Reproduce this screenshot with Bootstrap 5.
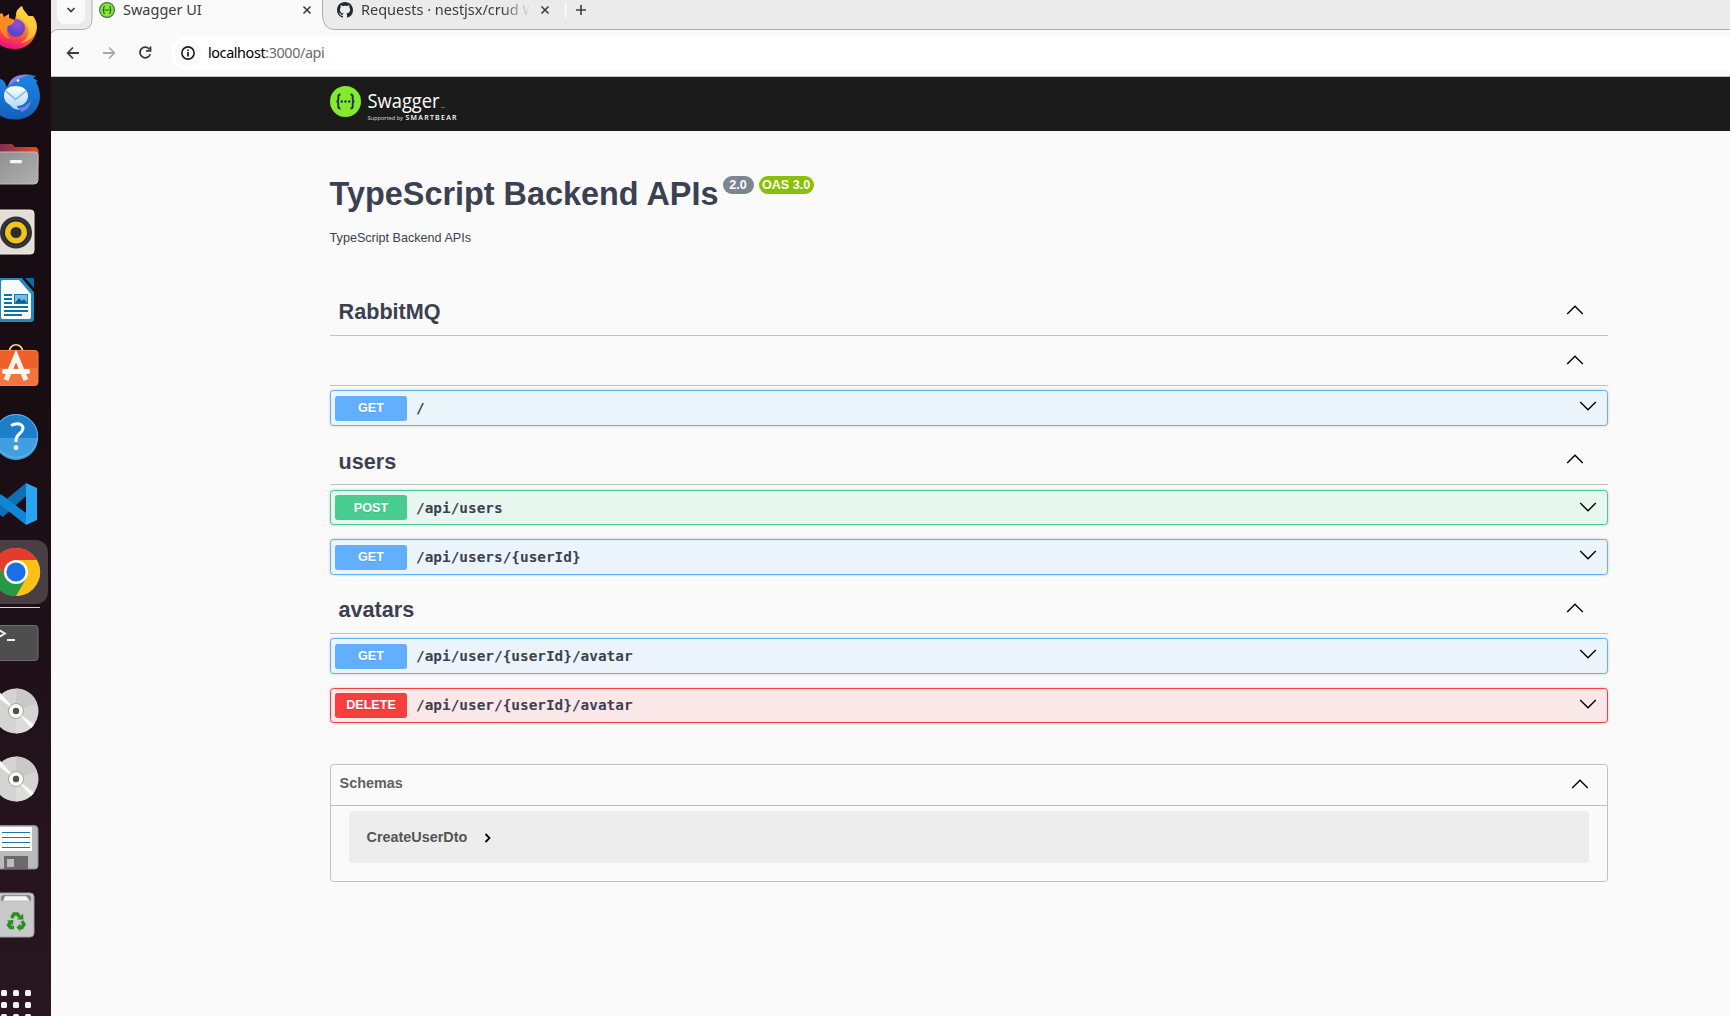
<!DOCTYPE html>
<html lang="en">
<head>
<meta charset="utf-8">
<title>Swagger UI</title>
<link href="https://cdn.jsdelivr.net/npm/bootstrap@5.3.0/dist/css/bootstrap.min.css" rel="stylesheet">
<style>
body{width:1730px;height:1016px;overflow:hidden;background:#fafafa;color:#3b4151;font-family:"Liberation Sans",Arial,sans-serif}
svg{display:block;flex:none}
.dock{width:51px;height:1016px;background:linear-gradient(170deg,#190d14 40%,#291620);overflow:hidden;flex:none}
.dock-list{margin-top:-6px}
.dock-line{height:3px;width:40px;padding-top:1px}
.dock-line::before{content:"";display:block;height:1px;background:#d8d4d6}
.chrome-ui{font-family:"Noto Sans",sans-serif;color:#3c3c3f}
.tabstrip{height:30px;background:#ebebeb}
.strip-shape{left:0;top:0;z-index:0}
.tab-menu{width:28px;height:24px;margin-left:6px;background:#fafafa;border-radius:0 0 8px 8px}
.tab-on{width:231px;height:20px;margin-left:7px;padding-left:7px}
.tab-off{width:242px;height:20px;padding-left:14px}
.tab-text{font-size:14.5px;line-height:20px;height:22px;white-space:nowrap}
.tab-fade{width:168px;-webkit-mask-image:linear-gradient(90deg,#000 84%,transparent 101%)}
.toolbar{height:47px;border-bottom:1px solid #bfbfbf;padding-top:6px}
.omnibox{height:34px;background:#fff;border-radius:17px 0 0 17px;margin-left:13px}
.info-dot{width:26px;height:26px;border-radius:50%;background:#fafafa;margin-left:4px}
.url{font-size:14.4px;line-height:34px;margin-left:7px;letter-spacing:-.4px}
.topbar{height:54px;background:#1b1b1b;padding-left:279px}
.api{width:1278px;margin-left:279px}
.api-title{font-size:32.4px;line-height:38px;height:38px;font-weight:700;margin-top:43px}
.api-name{padding-top:1px;width:387px;margin-left:-.4px;white-space:nowrap}
.pill{font-size:12.6px;line-height:18px;height:18px;border-radius:9px;color:#fff;font-weight:700;text-align:center;margin-top:2px}
.api-desc{font-size:12.6px;line-height:16px;margin:18px 0 0 -.4px}
.tag{height:50px;border-bottom:1px solid #bfc0c4;padding:0 24px 0 8.6px}
.tag svg{margin-bottom:1px}
.tag-name{font-size:21.6px;line-height:26px;font-weight:700;padding-top:3px}
.tag-low{padding-top:5px}
.op{height:35px;border:1px solid;border-radius:3.6px;box-shadow:0 0 3px rgba(0,0,0,.19);padding:0 10px 0 4px}
.op-tall{height:36px}
.op-get{border-color:#61affe;background:#ebf3fb}
.op-post{border-color:#49cc90;background:#e8f6f0}
.op-delete{border-color:#f93e3e;background:#fae7e7}
.verb{width:72px;height:25px;line-height:24px;font-size:12.6px;font-weight:700;color:#fff;text-align:center;border-radius:2.7px;text-shadow:0 1px 0 rgba(0,0,0,.1)}
.verb-low{line-height:26px}
.op-get .verb{background:#61affe}.op-post .verb{background:#49cc90}.op-delete .verb{background:#f93e3e}
.route{font-family:"DejaVu Sans Mono",monospace;font-weight:700;font-size:14.4px;line-height:20px;padding-left:9px}
.op svg{margin-bottom:3px}
.op-tall svg{margin-bottom:4px}
.op-post svg{margin-bottom:2px}
.op-delete .route{padding-bottom:2px}
.models{height:118px;margin-top:41px;border:1px solid #bfc0c4;border-radius:3.6px}
.models-head{height:41px;border-bottom:1px solid #bfc0c4;padding:0 18px 0 8.6px;font-size:14.4px;font-weight:700;color:#606060}
.models-head span{padding-bottom:2px}
.models-head svg{margin-bottom:3px}
.model{height:52px;margin:5px 18px 0;border-radius:3.6px;background:#ededed;padding-left:17.5px;font-size:14.4px;font-weight:700;color:#555}
.model span{padding-top:2px}
</style>
<script src="https://cdn.jsdelivr.net/npm/bootstrap@5.3.0/dist/js/bootstrap.bundle.min.js"></script>
</head>
<body class="d-flex">
<svg width="0" height="0" class="position-absolute"><defs>
<linearGradient id="ff" x1=".7" y1="0" x2=".4" y2="1"><stop offset="0" stop-color="#fff04a"/><stop offset=".4" stop-color="#ff9a2a"/><stop offset=".75" stop-color="#ff4348"/><stop offset="1" stop-color="#e8127e"/></linearGradient>
<radialGradient id="fp" cx=".6" cy=".3"><stop offset="0" stop-color="#9a4be0"/><stop offset="1" stop-color="#5a48c8"/></radialGradient>
<linearGradient id="tb" x1="0" y1="0" x2="0" y2="1"><stop offset="0" stop-color="#1f86e8"/><stop offset="1" stop-color="#135fb9"/></linearGradient>
<linearGradient id="en" x1="0" y1="0" x2="0" y2="1"><stop offset="0" stop-color="#fff"/><stop offset="1" stop-color="#a8d4fa"/></linearGradient>
<linearGradient id="gr" x1="0" y1="0" x2="1" y2="1"><stop offset="0" stop-color="#8f8f8f"/><stop offset="1" stop-color="#b0b0b0"/></linearGradient>
<linearGradient id="fo" x1="0" y1="0" x2="1" y2="0"><stop offset="0" stop-color="#7b2a4e"/><stop offset="1" stop-color="#e8501e"/></linearGradient>
<symbol id="up" viewBox="0 0 18 10"><path d="M1.200 9 9 1.200 16.800 9" fill="none" stroke="#000" stroke-width="1.400"/></symbol>
<symbol id="down" viewBox="0 0 18 10"><path d="M1.200 1 9 8.800 16.800 1" fill="none" stroke="#000" stroke-width="1.400"/></symbol>
<symbol id="disc" viewBox="0 0 51 68"><circle cx="16" cy="34" r="22.500" fill="#d4d4d4"/><path d="M16 34V11.500A22.500 22.500 0 0 1 37 26z" fill="#c9c9c9"/><path d="M16 34V56.500A22.500 22.500 0 0 0 35 46z" fill="#dcdcdc"/><path d="M16 34-7 17-3 12zM16 34 34 48 31 51z" fill="#fbfbf8"/><circle cx="16" cy="34" r="7.500" fill="#fafaf6" stroke="#aaa592"/><circle cx="16" cy="34" r="3.200" fill="#505050"/></symbol>
</defs></svg>

<nav class="dock"><div class="dock-list d-flex flex-column">
<svg width="51" height="68" viewBox="0 0 51 68"><path d="M0 20 2 19 4 23 9 20 9 24 15 26 16 21C16 16 19 14 22 12 23 17 27 19 28 22L33 22C37 27 38 33 36 39 33 49 25 55 15 55 7 55 2 53-3 48V20z" fill="url(#ff)"/><path d="M22 12C14 18 16 23 24 28 31 34 30 45 20 49 31 48 38 39 36 31L32 23 29 22C26 19 23 17 22 12z" fill="#ffd43f" opacity=".75"/><circle cx="16" cy="34" r="9" fill="url(#fp)"/><path d="M0 22 9 24 15 27C13 29 13 31 8 32 6 36 6 41 10 45 3 43-2 37 0 22z" fill="#ff8a25"/></svg>
<svg width="51" height="68" viewBox="0 0 51 68"><path d="M0 17C4 18 6 21 6 25L10 22C14 13 24 11 36 14L33 16 38 19 36 20C44 34 39 48 29 54 18 60 5 58-2 52V17z" fill="url(#tb)"/><path d="M8 24C11 14 20 11 32 13 22 13 16 20 8 24z" fill="#8b80e8"/><path d="M18 46Q27 45 31 38 30 47 22 50z" fill="#6e83e4"/><path d="M4 34C4 27 9 24 16 24 23 24 28 28 28 34 28 40 23 44 17 44 18 47 19 48 22 48 16 48 12 46 10 43 6 41 4 38 4 34z" fill="url(#en)"/><path d="M6 29 15.500 37.500 26 29" fill="none" stroke="#78b5ec" stroke-width="1.500"/><circle cx="18" cy="18.500" r="1.300" fill="#fff"/></svg>
<svg width="51" height="68" viewBox="0 0 51 68"><path d="M-2 14H12L15 17H34Q38 17 38.500 21V35H-2z" fill="url(#fo)"/><path d="M-2 22H35Q38 22 38 25V50Q38 54 34 54H-2z" fill="url(#gr)" stroke="#bcbcbc"/><rect x="10" y="30" width="12" height="3.200" rx="1.300" fill="#f5f5f5"/></svg>
<svg width="51" height="68" viewBox="0 0 51 68"><rect x="-6" y="12" width="40" height="44" rx="3.500" fill="#e3dfd6" stroke="#f5f1e8"/><circle cx="16" cy="34.500" r="16" fill="#303036"/><circle cx="16" cy="34.500" r="13.500" fill="#50505a"/><circle cx="16" cy="34.500" r="12" fill="#f0c419" stroke="#26262a" stroke-width="2"/><circle cx="16" cy="34.500" r="5.500" fill="#2c2c2c"/></svg>
<svg width="51" height="68" viewBox="0 0 51 68"><path d="M-3 12H22L34 26V53Q34 56 31 56H-3z" fill="#2488bd"/><path d="M22 12H34V26z" fill="#190d14"/><path d="M25 12H33Q34 12 34 13V22z" fill="#0d6ca5"/><path d="M1 16Q1 14 3 14H19L31 28V51Q31 53 29 53H3Q1 53 1 51z" fill="#f8fafc"/><path d="M4 29H12M4 33H12M4 37H12M4 41H28M4 45H28M4 49H22" stroke="#0c71ac" stroke-width="2"/><rect x="14.500" y="28.500" width="13" height="9" fill="#79bce6" stroke="#1679b2"/><path d="M15 37 19 32 22 35 24 33 27 37z" fill="#0c6093"/></svg>
<svg width="51" height="68" viewBox="0 0 51 68"><path d="M9 19C9 8 23 8 23 19" fill="none" stroke="#f3d6a4" stroke-width="1.700"/><path d="M-2 16.500H35Q38 16.500 38 19.500V48Q38 51.500 35 51.500H-2z" fill="#ee6029" stroke="#f08050"/><path d="M-2 34H38V48Q38 51 35 51H-2z" fill="#f47e4c" opacity=".7"/><path d="M6 46 16 22 26 46" fill="none" stroke="#fff3ea" stroke-width="5"/><rect x="2" y="35" width="28" height="5" rx="2.500" fill="#fff"/></svg>
<svg width="51" height="68" viewBox="0 0 51 68"><circle cx="16" cy="34" r="22" fill="#1d7fc9"/><path d="M-6 36H38A22 22 0 0 1-6 36z" fill="#40a0df"/><circle cx="16" cy="34" r="21.500" fill="none" stroke="#69b6e8"/><path d="M11 23.500C20 19 25 24 22 29 20 32 16 33 16 38V40" fill="none" stroke="#fff" stroke-width="3"/><circle cx="16" cy="45.700" r="2.400" fill="#fff"/></svg>
<svg width="51" height="68" viewBox="0 0 51 68"><path d="M-3 37 26 13V26L3 47-3 43z" fill="#0e6fb3"/><path d="M-3 23 2 25 26 43V55L-3 32z" fill="#1087d4"/><path d="M26 13 37 18V50L26 55z" fill="#29a6f0"/></svg>
<svg width="51" height="68" viewBox="0 0 51 68"><rect x="-16" y="2" width="64" height="64" rx="12" fill="#483e44"/><circle cx="16" cy="34" r="24" fill="#fbc116"/><path d="M16 22H36.800A24 24 0 0 1 16 58L26.400 40z" fill="#fbc116"/><path d="M-4.800 22 5.600 40Q12 48 26.400 40L16 58A24 24 0 0 1-4.800 22z" fill="#279847"/><path d="M-4.800 22A24 24 0 0 1 36.800 22H16L5.600 40z" fill="#e33b2e"/><circle cx="16" cy="34" r="12" fill="#fff"/><circle cx="16" cy="34" r="9.600" fill="#1a6fe8"/></svg>
<div class="dock-line"></div>
<svg width="51" height="68" viewBox="0 0 51 68"><rect x="-8" y="16.500" width="46" height="35" rx="3" fill="#4e4e4e" stroke="#6c6c6c"/><path d="M-1 21 5 24.500-1 28M7 31H15" fill="none" stroke="#f2f2f2" stroke-width="1.800"/></svg>
<svg width="51" height="68"><use href="#disc"/></svg>
<svg width="51" height="68"><use href="#disc"/></svg>
<svg width="51" height="68" viewBox="0 0 51 68"><path d="M-3 12.500H34Q38 12.500 38 16V53Q38 56 35 56H-3z" fill="#bababa" stroke="#8d8d8d"/><rect x="-1" y="14" width="33" height="24" rx="1" fill="#fff"/><path d="M2 19.500H30M2 24.500H30M2 29.500H30M2 34.500H30" stroke="#2277a8" stroke-width="1.200"/><rect x="4" y="43" width="24" height="13" fill="#6b6b6b"/><rect x="7" y="46" width="7" height="8" fill="#bdbdbd"/></svg>
<svg width="51" height="68" viewBox="0 0 51 68"><rect x="-5" y="12" width="39" height="44" rx="4" fill="#c9c9c9" stroke="#a0a0a0"/><path d="M1 20V17Q1 14 4 14H28Q31 14 31 17V20" fill="#848484"/><path d="M3 20 5 15H26L30 20z" fill="#f7f7f7" stroke="#aaa" stroke-width=".6"/><g fill="none" stroke="#2b8f22" stroke-width="3.400"><path d="M11.500 37 14 33H17.500L19.500 36"/><path d="M10.500 41 8.500 44 10.500 46.500H14"/><path d="M22 40 24 43.500 22 46.500H20"/></g><path d="M17 38.500 23.500 38.500 23 32.500zM7 39.500 13.500 39 12.500 44.500zM20.500 42.500V50.500L16.500 46.500z" fill="#2b8f22"/></svg>
<svg width="51" height="68" viewBox="0 0 51 68" fill="#f4f2f3"><rect x="1" y="41" width="6" height="6" rx="1.500"/><rect x="13" y="41" width="6" height="6" rx="1.500"/><rect x="25" y="41" width="6" height="6" rx="1.500"/><rect x="1" y="53" width="6" height="6" rx="1.500"/><rect x="13" y="53" width="6" height="6" rx="1.500"/><rect x="25" y="53" width="6" height="6" rx="1.500"/><rect x="1" y="65" width="6" height="6" rx="1.500"/><rect x="13" y="65" width="6" height="6" rx="1.500"/><rect x="25" y="65" width="6" height="6" rx="1.500"/></svg>
</div></nav>

<div class="flex-grow-1">
<div class="chrome-ui">
  <div class="tabstrip d-flex position-relative">
    <svg class="strip-shape position-absolute" width="1679" height="36"><path d="M-2 60V36Q1 29.500 8 29.500H31Q41 29.500 41 19V-2H271.500V15Q272 29.500 284 29.500H1690V60z" fill="#fafafa" stroke="#adadad"/></svg>
    <div class="tab-menu position-relative d-flex justify-content-center"><svg width="10" height="20" viewBox="0 0 10 20"><path d="M1.500 8 5 11.500 8.500 8" fill="none" stroke="#3c3c3f" stroke-width="1.700"/></svg></div>
    <div class="tab-on position-relative d-flex align-items-center">
      <svg width="16" height="16" viewBox="0 0 16 16"><circle cx="8" cy="8" r="7.400" fill="#85ea2d" stroke="#4a7258" stroke-width="1.200"/><path d="M6 4.300Q4.700 4.300 4.700 5.500V7Q4.700 8 3.500 8 4.700 8 4.700 9V10.500Q4.700 11.700 6 11.700M10 4.300Q11.300 4.300 11.300 5.500V7Q11.300 8 12.500 8 11.300 8 11.300 9V10.500Q11.300 11.700 10 11.700M5.500 8H10.500" fill="none" stroke="#2e5a3c" stroke-width="1.100"/></svg>
      <span class="tab-text flex-grow-1 ps-2">Swagger UI</span>
      <svg width="16" height="16" viewBox="0 0 16 16" style="margin-right:7px"><path d="M3.500 4.500 10.500 11.500M10.500 4.500 3.500 11.500" stroke="#3c3c3f" stroke-width="1.600"/></svg>
    </div>
    <div class="tab-off position-relative d-flex align-items-center">
      <svg width="16" height="16" viewBox="0 0 16 16"><path fill="#24292f" d="M8 0C3.580 0 0 3.580 0 8c0 3.540 2.290 6.530 5.470 7.590.4.070.55-.17.55-.38 0-.19-.01-.82-.01-1.490-2.010.37-2.530-.49-2.690-.94-.09-.23-.48-.94-.82-1.130-.28-.15-.68-.52-.01-.53.630-.01 1.080.58 1.230.82.720 1.210 1.870.87 2.330.66.070-.52.28-.87.51-1.070-1.780-.2-3.640-.89-3.640-3.950 0-.87.31-1.590.82-2.150-.08-.2-.36-1.020.08-2.120 0 0 .67-.21 2.200.82.640-.18 1.320-.27 2-.27s1.360.09 2 .27c1.530-1.040 2.200-.82 2.200-.82.440 1.100.16 1.920.08 2.120.51.56.82 1.270.82 2.150 0 3.070-1.870 3.750-3.650 3.950.29.25.54.73.54 1.480 0 1.070-.01 1.930-.01 2.200 0 .21.15.46.55.38A8.010 8.010 0 0 0 16 8c0-4.420-3.580-8-8-8z"/></svg>
      <span class="tab-text tab-fade ms-2">Requests · nestjsx/crud W</span>
      <svg class="ms-2" width="16" height="16" viewBox="0 0 16 16"><path d="M4.500 4.500 11.500 11.500M11.500 4.500 4.500 11.500" stroke="#3c3c3f" stroke-width="1.600"/></svg>
    </div>
    <svg class="position-relative" width="30" height="20" viewBox="0 0 30 20"><path d="M0 2V18" stroke="#fff" stroke-width="2.400"/><path d="M11 10H21M16 5V15" stroke="#3c3c3f" stroke-width="1.600"/></svg>
  </div>
  <div class="toolbar d-flex position-relative">
    <svg width="107" height="34" viewBox="0 0 107 34" fill="none" stroke="#3c3c3f" stroke-width="1.800"><path d="M28 17H17M22 11.500 16.700 17 22 22.500"/><path d="M52 17H63M58 11.500 63.300 17 58 22.500" stroke="#a9a9aa"/><path d="M98.500 13.200A5.300 5.300 0 1 0 99.300 18.300M99.500 10.500V14.800H95"/></svg>
    <div class="omnibox flex-grow-1 d-flex align-items-center">
      <div class="info-dot d-flex align-items-center justify-content-center"><svg width="14" height="14" viewBox="0 0 14 14"><circle cx="7" cy="7" r="6.100" fill="none" stroke="#1b1b1d" stroke-width="1.600"/><path d="M7 6V10.500M7 3.400V5" stroke="#1b1b1d" stroke-width="1.700"/></svg></div>
      <span class="url"><span class="text-black">localhost</span><span style="color:#6b6b6b">:3000/api</span></span>
    </div>
  </div>
</div>

<header class="topbar">
<svg width="140" height="54" viewBox="0 0 140 54"><circle cx="15.500" cy="24.500" r="15.500" fill="#85ea2d"/><path d="M10.500 17.500Q8.300 17.500 8.300 19.500V22.500Q8.300 24.500 6.500 24.500 8.300 24.500 8.300 26.500V29.500Q8.300 31.500 10.500 31.500M20.500 17.500Q22.700 17.500 22.700 19.500V22.500Q22.700 24.500 24.500 24.500 22.700 24.500 22.700 26.500V29.500Q22.700 31.500 20.500 31.500" fill="none" stroke="#173647" stroke-width="1.900"/><g fill="#173647"><circle cx="11.700" cy="24.500" r="1.200"/><circle cx="15.500" cy="24.500" r="1.200"/><circle cx="19.300" cy="24.500" r="1.200"/></g>
<text x="37.500" y="31" font-family="Open Sans" font-size="19.800" fill="#fff" textLength="72" lengthAdjust="spacingAndGlyphs">Swagger</text><text x="111" y="31" font-family="Open Sans" font-size="2.500" fill="#fff">TM</text>
<text x="37.500" y="43.300" font-family="Open Sans" font-size="5.800" fill="#ddd" textLength="35.500">Supported by</text><text x="75.500" y="43.300" font-family="Open Sans" font-weight="600" font-size="7" fill="#fff" textLength="51">SMARTBEAR</text></svg>
</header>

<main class="api">
  <div class="d-flex align-items-start api-title"><span class="api-name">TypeScript Backend APIs</span><span class="pill" style="width:31px;background:#7d8492;margin-left:6px">2.0</span><span class="pill" style="width:55px;background:#89bf04;margin-left:5px">OAS 3.0</span></div>
  <div class="api-desc">TypeScript Backend APIs</div>

  <section style="margin-top:40px">
    <div class="tag d-flex align-items-center justify-content-between"><span class="tag-name">RabbitMQ</span><svg width="18" height="10"><use href="#up"/></svg></div>
  </section>
  <section>
    <div class="tag d-flex align-items-center justify-content-end"><svg width="18" height="10"><use href="#up"/></svg></div>
    <div class="op op-tall op-get d-flex align-items-center mt-1"><span class="verb">GET</span><span class="route flex-grow-1">/</span><svg width="18" height="10"><use href="#down"/></svg></div>
  </section>
  <section style="margin-top:9px">
    <div class="tag d-flex align-items-center justify-content-between"><span class="tag-name tag-low">users</span><svg width="18" height="10"><use href="#up"/></svg></div>
    <div class="op op-post d-flex align-items-center" style="margin-top:5px"><span class="verb verb-low">POST</span><span class="route flex-grow-1">/api/users</span><svg width="18" height="10"><use href="#down"/></svg></div>
    <div class="op op-tall op-get d-flex align-items-center" style="margin-top:14px"><span class="verb">GET</span><span class="route flex-grow-1">/api/users/{userId}</span><svg width="18" height="10"><use href="#down"/></svg></div>
  </section>
  <section style="margin-top:9px">
    <div class="tag d-flex align-items-center justify-content-between"><span class="tag-name">avatars</span><svg width="18" height="10"><use href="#up"/></svg></div>
    <div class="op op-tall op-get d-flex align-items-center mt-1"><span class="verb">GET</span><span class="route flex-grow-1">/api/user/{userId}/avatar</span><svg width="18" height="10"><use href="#down"/></svg></div>
    <div class="op op-delete d-flex align-items-center" style="margin-top:14px"><span class="verb">DELETE</span><span class="route flex-grow-1">/api/user/{userId}/avatar</span><svg width="18" height="10"><use href="#down"/></svg></div>
  </section>

  <section class="models">
    <div class="models-head d-flex align-items-center justify-content-between"><span>Schemas</span><svg width="18" height="10"><use href="#up"/></svg></div>
    <div class="model d-flex align-items-center"><span>CreateUserDto</span><svg width="8" height="12" viewBox="0 0 8 12" style="margin:2px 0 0 17px"><path d="M1.500 2 5.500 6 1.500 10" fill="none" stroke="#000" stroke-width="1.800"/></svg></div>
  </section>
</main>
</div>
</body>
</html>
